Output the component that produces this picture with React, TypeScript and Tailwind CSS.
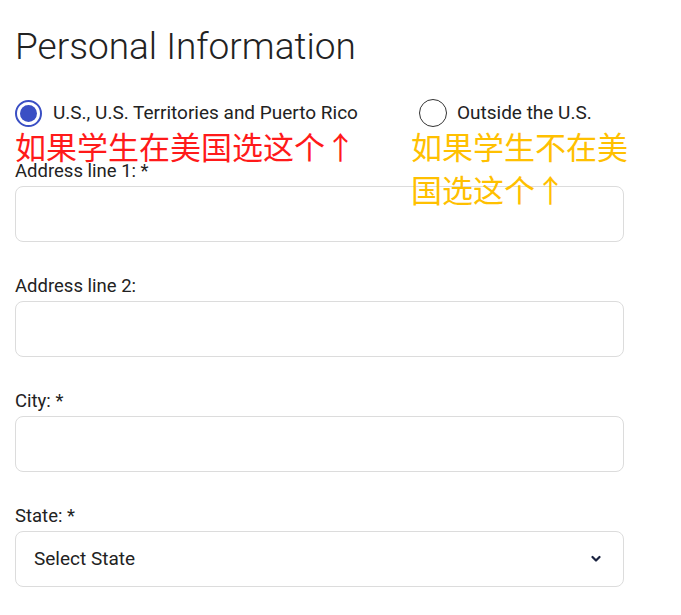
import React from "react";

const font = { fontFamily: "Roboto, 'Noto Sans CJK SC', sans-serif" };

function Field({ label }: { label: string }) {
  return (
    <div className="flex flex-col gap-[4px] mb-[31px]">
      <label className="text-[18.5px] leading-[24px] pt-[1px] -mb-[1px] text-[#222]">{label}</label>
      <div className="h-[56px] w-full rounded-[8px] border border-[#dcdcdc] bg-white" />
    </div>
  );
}

export default function App() {
  return (
    <div className="relative min-h-[615px] w-[681px] bg-white" style={font}>
      <div className="w-[624px] pl-[15px] pt-[24px]">
        <h1 className="text-[37px] font-light leading-[46px] text-[#222]">
          Personal Information
        </h1>
        <div className="mt-[29px] flex items-center h-[28px]">
          <div className="flex items-center">
            <span className="flex h-[27px] w-[27px] items-center justify-center rounded-full border-[2px] border-[#3a4fc4]">
              <span className="h-[17px] w-[17px] rounded-full bg-[#3a4fc4]" />
            </span>
            <span className="ml-[11px] text-[19px] text-[#222]">
              U.S., U.S. Territories and Puerto Rico
            </span>
          </div>
          <div className="ml-[61px] flex items-center">
            <span className="h-[28px] w-[28px] rounded-full border-[1.5px] border-[#333]" />
            <span className="ml-[10px] text-[19px] text-[#222]">Outside the U.S.</span>
          </div>
        </div>
        <div className="h-[31px]" />
        <Field label="Address line 1: *" />
        <Field label="Address line 2:" />
        <Field label="City: *" />
        <div className="flex flex-col gap-[4px]">
          <label className="text-[18.5px] leading-[24px] pt-[1px] -mb-[1px] text-[#222]">State: *</label>
          <div className="flex h-[56px] w-full items-center justify-between rounded-[8px] border border-[#dcdcdc] bg-white pl-[18px] pr-[22px]">
            <span className="text-[19px] text-[#222]">Select State</span>
            <svg width="10" height="8" viewBox="0 0 10 8">
              <path d="M1.5 2 L5 5.5 L8.5 2" fill="none" stroke="#1a2340" strokeWidth="2.2" strokeLinecap="round" strokeLinejoin="round" />
            </svg>
          </div>
        </div>
      </div>
      <div
        className="absolute left-[15px] top-[124px] text-[31px] leading-[43px] text-[#ff1a1a]"
        style={{ fontFamily: "'Noto Sans CJK SC', sans-serif" }}
      >
        如果学生在美国选这个↑
      </div>
      <div
        className="absolute left-[411px] top-[124px] w-[230px] text-[31px] leading-[43px] text-[#ffc000]"
        style={{ fontFamily: "'Noto Sans CJK SC', sans-serif" }}
      >
        如果学生不在美国选这个↑
      </div>
    </div>
  );
}
